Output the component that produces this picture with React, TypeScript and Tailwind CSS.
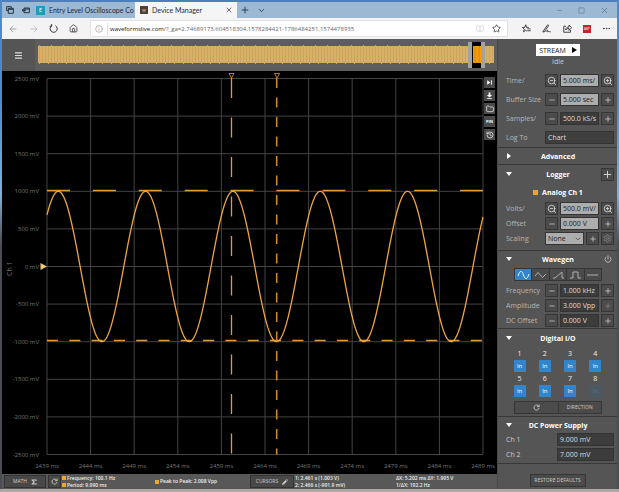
import React from "react";
import {
  ArrowLeft, ArrowRight, House, Info, Plus, ChevronDown, X, Star, BookOpen,
  Ellipsis, Minus, Square, Menu, ZoomIn, ZoomOut, Settings, Power, Folder, History,
} from "lucide-react";

const range = (n: number) => Array.from({ length: n }, (_, i) => i);

/* ---------- icons ---------- */

function Glyph({ d, size, fill, width = 1 }: { d: string; size: number; fill?: boolean; width?: number }) {
  return (
    <svg
      width={size}
      height={size}
      viewBox="0 0 12 12"
      fill={fill ? "currentColor" : "none"}
      stroke={fill ? "none" : "currentColor"}
      strokeWidth={width}
    >
      <path d={d} />
    </svg>
  );
}

const RELOAD = "M3.500 2.500A4.700 4.700 0 1 0 8.500 2.200M3.500 0V3H.8";
const REFRESH = "M9.800 4A4.300 4.300 0 1 0 10.300 7M10.500 1V4.500H7";
const PEN = "M1 10.500L7.500 1L9 2L3 10.500ZM5 10.500C7 7.500 8 8 7.500 10.500C9 9 9.500 10.500 11.500 10.500";
const SHARE = "M4 3H1V11H10V8M3.500 8C3.500 5 5.500 4 8 4V1.500L11.500 5L8 8.500V6C6 6 4.500 6.500 3.500 8Z";
const FAVORITES = "M5 1L6 4.500H9M5 1L3.800 4.500H.5L3 6.800L2 10.500L5 8.300L6.500 9.500M7 6.500H11.500M7 9H11.500";
const ASIDE = "M3 3H11V10H3ZM3 4.500H11M0 6.500H6M2 4.500L0 6.500L2 8.500";
const STACK = "M1 1H8V3M1 1V7H3M3.500 3.500H11V11H3.500ZM3.500 5H11";
const TO_END = "M2 2V10L7.500 6ZM8.500 2H10V10H8.500Z";
const DOWN = "M4.500 1H7.500V5H10.500L6 9.500L1.500 5H4.500ZM2 10.200H10V11.700H2Z";
const PENCIL = "M0 12L1 8.500L7.500 2L10 4.500L3.500 11ZM8.300 1.200L9.500 0L12 2.500L10.800 3.700Z";
const SIGMA = "M1 1H11V4H9.500V2.800H4.500L8 6L4.500 9.200H9.500V8H11V11H1V9.500L5 6L1 2.500Z";

/* ---------- browser chrome ---------- */

function TabStrip() {
  return (
    <div className="flex h-[18px] items-stretch border-t-2 border-[#4c7fbb] bg-[#9cb8d3] font-[Lato,sans-serif] text-[7px] text-[#1c2b3a]">
      <button aria-label="Tabs set aside" className="flex w-4 items-center justify-center"><Glyph d={STACK} size={8} width={1.4} /></button>
      <button aria-label="Set tabs aside" className="flex w-4 items-center justify-center"><Glyph d={ASIDE} size={8} width={1.4} /></button>
      <button className="flex w-[101px] items-center gap-1 pl-0.5 whitespace-nowrap">
        <span className="h-[9px] w-[9px] shrink-0 bg-[#1b9fb5] text-center text-[5px] leading-2 text-white">E</span>
        <span>Entry Level Oscilloscope Co</span>
      </button>
      <div className="flex w-[102px] items-center bg-[#f5f5f5]">
        <button className="flex flex-1 items-center gap-1 pl-[5px] whitespace-nowrap">
          <span className="h-2 w-2 bg-[#4d3f31] text-center text-[5px] leading-2 text-[#cdbfa8]">w</span>
          Device Manager
        </button>
        <button aria-label="Close tab" className="mr-1"><X size={8} /></button>
      </div>
      <button aria-label="New tab" className="flex w-4 items-center justify-center"><Plus size={10} /></button>
      <button aria-label="Tab list" className="flex w-4 items-center justify-center"><ChevronDown size={9} /></button>
      <div className="ml-auto flex items-center gap-[15px] pr-2 text-[#5d7690]">
        <button aria-label="Minimize"><Minus size={7} /></button>
        <button aria-label="Maximize"><Square size={7} /></button>
        <button aria-label="Close window"><X size={9} /></button>
      </div>
    </div>
  );
}

function AddressBar() {
  return (
    <div className="flex h-[21px] items-center bg-[#f3f3f3] text-[#333]">
      <div className="flex w-[88px] items-center justify-between pr-3 pl-1.5">
        <button aria-label="Back" className="text-[#999]"><ArrowLeft size={10} /></button>
        <button aria-label="Forward" className="text-[#bbb]"><ArrowRight size={10} /></button>
        <button aria-label="Reload"><Glyph d={RELOAD} size={9} width={1.3} /></button>
        <button aria-label="Home"><House size={9} /></button>
      </div>
      <div className="flex h-[17px] flex-1 items-center gap-1 border border-[#e2e2e2] bg-white px-1">
        <Info size={8} className="text-[#999]" />
        <div className="flex-1 border-l border-[#ddd] pl-0.5 text-[6px] leading-3 whitespace-nowrap text-[#666]">
          <span className="text-[#111]">waveformslive.com</span>/?_ga=2.74689173.604518304.1578284421-1786484251.1574478935
        </div>
        <button aria-label="Reading view" className="mr-1 text-[#ccc]"><BookOpen size={8} /></button>
        <button aria-label="Favorite" className="mr-0.5"><Star size={9} /></button>
      </div>
      <div className="flex w-[109px] items-center justify-between pr-1.5 pl-[14px]">
        <button aria-label="Favorites list"><Glyph d={FAVORITES} size={9} width={1.2} /></button>
        <button aria-label="Notes"><Glyph d={PEN} size={9} width={1.2} /></button>
        <button aria-label="Share"><Glyph d={SHARE} size={9} width={1.2} /></button>
        <button aria-label="Extension" className="h-2 w-2 bg-[#c6262b] text-center text-[3px] leading-2 text-white">ABP</button>
        <button aria-label="More"><Ellipsis size={9} /></button>
      </div>
    </div>
  );
}

/* ---------- timeline ---------- */

function Timeline() {
  return (
    <div className="flex h-8 bg-[#555]">
      <button aria-label="Menu" className="flex w-[33px] items-center justify-center text-[#ddd]"><Menu size={9} strokeWidth={3} /></button>
      <svg viewBox="0 0 462 32" preserveAspectRatio="none" className="h-8 min-w-0 flex-1 bg-[#5d5d5d]">
        <rect x="3" y="7" width="456" height="17" fill="#d9b068" />
        {range(152).map((i) => (
          <path key={i} d={`M${4.5 + i * 3} ${i % 4 ? 7 : 6}V${i % 3 ? 24 : 25}`} stroke="#cda45e" strokeWidth="1" />
        ))}
        <rect x="433" y="3" width="4" height="26" fill="#a3a3a3" />
        <rect x="437" y="3" width="9" height="26" fill="#000" />
        <rect x="446" y="3" width="4" height="26" fill="#a3a3a3" />
        <rect x="438" y="7" width="8" height="17" fill="#f59b0c" />
        <path d="M440 7V24M444 7V24" stroke="#d88406" />
      </svg>
    </div>
  );
}

/* ---------- chart ---------- */

const LEFT = 45, TOP = 7.5, DX = 43.6, DY = 37.6;
const RIGHT = LEFT + DX * 10, BOTTOM = TOP + DY * 10, ZERO = TOP + DY * 5;

const wave = range(437)
  .map((i) => {
    const x = LEFT + i;
    const y = ZERO - 2 * DY * Math.cos((2 * Math.PI * (x - 56.3)) / 87.3);
    return `${i ? "L" : "M"}${x} ${y.toFixed(2)}`;
  })
  .join("");

function Chart() {
  return (
    <div className="relative bg-black">
      <svg viewBox="0 0 495 403" className="block w-full" fontSize="6" fill="#777">
        <g stroke="#444">
          {range(11).map((i) => <path key={i} d={`M${LEFT + DX * i} ${TOP}V${BOTTOM}`} />)}
          {range(11).map((i) => <path key={i} d={`M${LEFT} ${TOP + DY * i}H${RIGHT}`} />)}
        </g>
        {range(11).map((i) => (
          <text key={i} x="37" y={TOP + DY * i + 2} textAnchor="end">{2500 - 500 * i} mV</text>
        ))}
        {range(11).map((i) => (
          <text key={i} x={LEFT + DX * i} y="397" textAnchor="middle">{2439 + 5 * i} ms</text>
        ))}
        <text x="10" y="205" fontSize="7" transform="rotate(-90 10 205)">Ch 1</text>
        <g stroke="#e39a35" fill="none">
          <path d={`M${LEFT} 119.500H${RIGHT}`} strokeWidth="1.3" strokeDasharray="23 22.9" />
          <path d={`M${LEFT} 269.500H${RIGHT}`} strokeWidth="1.3" strokeDasharray="11.1 11.2" />
          <path d={`M229.500 7V${BOTTOM}`} strokeWidth="1.3" strokeDasharray="20 19.5" />
          <path d={`M274.700 7V${BOTTOM}`} stroke="#c98a2c" strokeWidth="1.6" strokeDasharray="10 9.5" />
          <path d="M227 2.500h5l-2.500 4.500zM272.500 2.500h5l-2.500 4.500z" strokeWidth=".8" />
          <path d={wave} stroke="#eda542" strokeWidth="1.3" />
        </g>
        <path d="M38.500 192v7l6.500 -3.500z" fill="#f3c96b" />
      </svg>
      <div className="absolute top-1.5 right-0.5 flex flex-col gap-0.5 text-white">
        <Tool label="Jump to end"><Glyph d={TO_END} size={7} fill /></Tool>
        <Tool label="Export"><Glyph d={DOWN} size={7} fill /></Tool>
        <Tool label="Open"><Folder size={8} /></Tool>
        <Tool label="Pin"><span className="text-[4px] font-bold">PIN</span></Tool>
        <Tool label="History"><History size={8} /></Tool>
      </div>
    </div>
  );
}

function Tool({ label, children }: { label: string; children: React.ReactNode }) {
  return <button aria-label={label} className="flex h-[11px] w-[11px] items-center justify-center bg-[#4a4a4a]">{children}</button>;
}

/* ---------- status bar ---------- */

function Reading({ children }: { children: React.ReactNode }) {
  return (
    <div className="flex items-center gap-px whitespace-nowrap">
      <span className="h-1 w-1 bg-[#f0a52a]" />
      {children}
    </div>
  );
}

function StatusBar() {
  const btn = "flex h-[13px] items-center justify-center gap-1 border border-[#333] bg-[#484848] font-normal text-[#ccc]";
  return (
    <div className="flex h-[15px] items-center bg-[#585858] pl-0.5 text-[5px] leading-[7px] font-semibold text-[#eee]">
      <button className={`${btn} w-[42px]`}>MATH <Glyph d={SIGMA} size={6} fill /></button>
      <button aria-label="Refresh" className={`${btn} ml-0.5 w-[13px]`}><Glyph d={REFRESH} size={7} width={1.5} /></button>
      <div className="ml-px w-[93px]">
        <Reading>Frequency: 100.1 Hz</Reading>
        <Reading>Period: 9.990 ms</Reading>
      </div>
      <div className="w-[95px]"><Reading>Peak to Peak: 2.008 Vpp</Reading></div>
      <button className={`${btn} w-[44px]`}>CURSORS <Glyph d={PENCIL} size={6} fill /></button>
      <div className="ml-px w-[101px] whitespace-nowrap">
        <div>1: 2.461 s (1.003 V)</div>
        <div>2: 2.466 s (-991.9 mV)</div>
      </div>
      <div className="whitespace-nowrap">
        <div>ΔX: 5.202 ms ΔY: 1.995 V</div>
        <div>1/ΔX: 192.2 Hz</div>
      </div>
    </div>
  );
}

/* ---------- control panel ---------- */

function IconButton({ label, dim, children }: { label: string; dim?: boolean; children: React.ReactNode }) {
  return (
    <button aria-label={label} className={`flex h-[13px] w-[13px] shrink-0 items-center justify-center border border-[#363636] bg-[#4b4b4b] ${dim ? "text-[#888]" : "text-[#ddd]"}`}>
      {children}
    </button>
  );
}

function Stepper({ label, value, light, zoom, dimPlus }: { label: string; value: string; light?: boolean; zoom?: boolean; dimPlus?: boolean }) {
  const id = label.replace(/\W/g, "").toLowerCase();
  return (
    <div className="flex h-[13px] items-center gap-0.5">
      <label htmlFor={id} className="w-[37px] whitespace-nowrap text-[#b5b5b5]">{label}</label>
      <IconButton label={`${label} down`}>{zoom ? <ZoomOut size={10} /> : <Minus size={8} />}</IconButton>
      <input
        id={id}
        defaultValue={value}
        className={`h-[13px] min-w-0 flex-1 border border-[#333] pl-0.5 ${light ? "bg-[#adadad] text-[#222]" : "bg-[#3c3c3c] text-[#ddd]"}`}
      />
      <IconButton label={`${label} up`} dim={dimPlus}>{zoom ? <ZoomIn size={10} /> : <Plus size={8} />}</IconButton>
    </div>
  );
}

function Header({ title, closed, tall, action }: { title: string; closed?: boolean; tall?: boolean; action?: React.ReactNode }) {
  return (
    <div className={`flex items-center ${tall ? "h-[18px]" : "h-4"}`}>
      <button aria-label={`Toggle ${title}`} className="w-3.5 shrink-0">
        <svg viewBox="0 0 6 6" className="h-1.5 w-1.5" fill="#fff"><path d={closed ? "M1 0v6l4-3z" : "M0 1h6l-3 4z"} /></svg>
      </button>
      <h2 className="flex-1 text-center text-[7px] font-bold whitespace-nowrap text-white">{title}</h2>
      <div className="flex w-[18px] shrink-0 justify-end text-[#ddd]">{action}</div>
    </div>
  );
}

const shapes = [
  "M1 5C3 -1 5 -1 6.500 4S10 9 12 3",
  "M1 5L4 1.500L8.500 6.500L12 3",
  "M1 7H3L10 1V7H12",
  "M1 7H4V1H9V7H12",
  "M1 4H12",
];
const shapeNames = ["Sine", "Triangle", "Sawtooth", "Square", "DC"];

function Panel() {
  const section = "border-b border-[#383838] pr-[3px] pl-2";
  return (
    <aside className="w-[120px] shrink-0 border-l border-[#484848] bg-[#555] text-[7px] leading-[9px]">
      <section className={`${section} pt-[5px] pb-[3px]`}>
        <div className="flex flex-col items-center pr-1">
          <button className="flex h-3 w-[44px] items-center justify-center gap-1.5 bg-white text-[#222]">
            STREAM
            <svg viewBox="0 0 5 6" className="h-1.5 w-[5px]"><path d="M0 0v6l5-3z" /></svg>
          </button>
          <div className="h-3 leading-3 text-[#ccc]">Idle</div>
        </div>
        <div className="mt-1.5 flex flex-col gap-1.5">
          <Stepper label="Time/" value="5.000 ms/" light zoom />
          <Stepper label="Buffer Size" value="5.000 sec" light />
          <Stepper label="Samples/" value="500.0 kS/s" />
          <div className="flex h-[13px] items-center gap-0.5">
            <label htmlFor="log" className="w-[37px] text-[#b5b5b5]">Log To</label>
            <select id="log" className="h-[13px] flex-1 appearance-none border border-[#333] bg-[#3f3f3f] pl-0.5 text-[#ddd]">
              <option>Chart</option>
            </select>
          </div>
        </div>
      </section>

      <section className={section}><Header title="Advanced" closed /></section>

      <section className={`${section} pb-[5px]`}>
        <Header title="Logger" tall action={<IconButton label="Add logger"><Plus size={11} /></IconButton>} />
        <div className="mb-px flex h-[18px] items-center justify-center gap-1 pr-1 text-[7px] font-bold text-white">
          <span className="h-[5px] w-[5px] bg-[#f0a52a]" />
          Analog Ch 1
        </div>
        <div className="flex flex-col gap-0.5">
          <Stepper label="Volts/" value="500.0 mV/" light zoom />
          <Stepper label="Offset" value="0.000 V" light />
          <div className="flex h-[13px] items-center gap-0.5">
            <label htmlFor="scaling" className="w-[37px] text-[#b5b5b5]">Scaling</label>
            <div className="relative flex-1">
              <select id="scaling" className="block h-[13px] w-full appearance-none border border-[#333] bg-[#adadad] pl-0.5 text-[#222]">
                <option>None</option>
              </select>
              <ChevronDown size={8} className="pointer-events-none absolute top-[3px] right-0.5 text-[#444]" />
            </div>
            <IconButton label="Add scaling"><Plus size={8} /></IconButton>
            <IconButton label="Scaling settings" dim><Settings size={9} /></IconButton>
          </div>
        </div>
      </section>

      <section className={`${section} pb-px`}>
        <Header title="Wavegen" action={<button aria-label="Power" className="mr-0.5"><Power size={8} /></button>} />
        <div className="mt-px mb-[3px] ml-2 flex h-[13px] w-[88px] border border-[#363636]">
          {shapes.map((d, i) => (
            <button key={d} aria-label={shapeNames[i]} className={`flex flex-1 items-center justify-center border-r border-[#363636] last:border-r-0 ${i === 0 ? "bg-[#3185cc]" : "bg-[#4b4b4b]"}`}>
              <svg viewBox="0 0 13 8" className="h-2 w-[13px]" fill="none" stroke={i ? "#bbb" : "#fff"} strokeWidth=".9"><path d={d} /></svg>
            </button>
          ))}
        </div>
        <div className="flex flex-col gap-0.5">
          <Stepper label="Frequency" value="1.000 kHz" />
          <Stepper label="Amplitude" value="3.000 Vpp" dimPlus />
          <Stepper label="DC Offset" value="0.000 V" />
        </div>
      </section>

      <section className={`${section} pb-0.5`}>
        <Header title="Digital I/O" tall />
        <div className="grid grid-cols-4 pr-[6px] pl-px">
          {range(8).map((i) => (
            <div key={i} className="flex flex-col items-center">
              <span className="h-[13px] text-[7px] leading-[13px] text-[#eee]">{i + 1}</span>
              <button aria-label={`Channel ${i + 1}`} disabled={i === 7} className={`h-3 w-3 text-[6px] leading-3 ${i === 7 ? "bg-[#4b5964] text-[#5b7184]" : "bg-[#3185cc] text-white"}`}>In</button>
            </div>
          ))}
        </div>
        <div className="mt-1 ml-2 flex h-[13px] w-[88px] border border-[#363636] bg-[#4b4b4b] text-[5px] text-[#ccc]">
          <button aria-label="Refresh" className="flex flex-1 items-center justify-center border-r border-[#363636]"><Glyph d={REFRESH} size={7} width={1.5} /></button>
          <button className="flex-1">DIRECTION</button>
        </div>
      </section>

      <section className={`${section} pb-0.5`}>
        <Header title="DC Power Supply" />
        <div className="flex flex-col gap-0.5">
          {[["Ch 1", "9.000 mV"], ["Ch 2", "7.000 mV"]].map(([name, value]) => (
            <div key={name} className="flex h-[13px] items-center">
              <label htmlFor={name} className="w-[51px] text-[#ccc]">{name}</label>
              <input id={name} defaultValue={value} className="h-[13px] min-w-0 flex-1 border border-[#333] bg-[#3c3c3c] pl-0.5 text-[#ddd]" />
            </div>
          ))}
        </div>
      </section>

      <div className="flex justify-center pt-2.5 pb-0.5">
        <button className="h-[13px] w-14 border border-[#363636] bg-[#4b4b4b] text-[5px] text-[#ccc]">RESTORE DEFAULTS</button>
      </div>
    </aside>
  );
}

export default function App() {
  return (
    <div className="min-h-screen bg-[#aaa9a5] font-['Open_Sans','Noto_Sans',sans-serif]">
      <div className="bg-linear-to-b from-[#4c8ac8] from-20% via-[#7fb0d8] via-40% to-[#4a4d55] to-50% px-0.5">
        <TabStrip />
        <AddressBar />
        <div className="flex">
          <main className="flex min-w-0 flex-1 flex-col bg-black">
            <Timeline />
            <Chart />
            <StatusBar />
          </main>
          <Panel />
        </div>
      </div>
    </div>
  );
}
